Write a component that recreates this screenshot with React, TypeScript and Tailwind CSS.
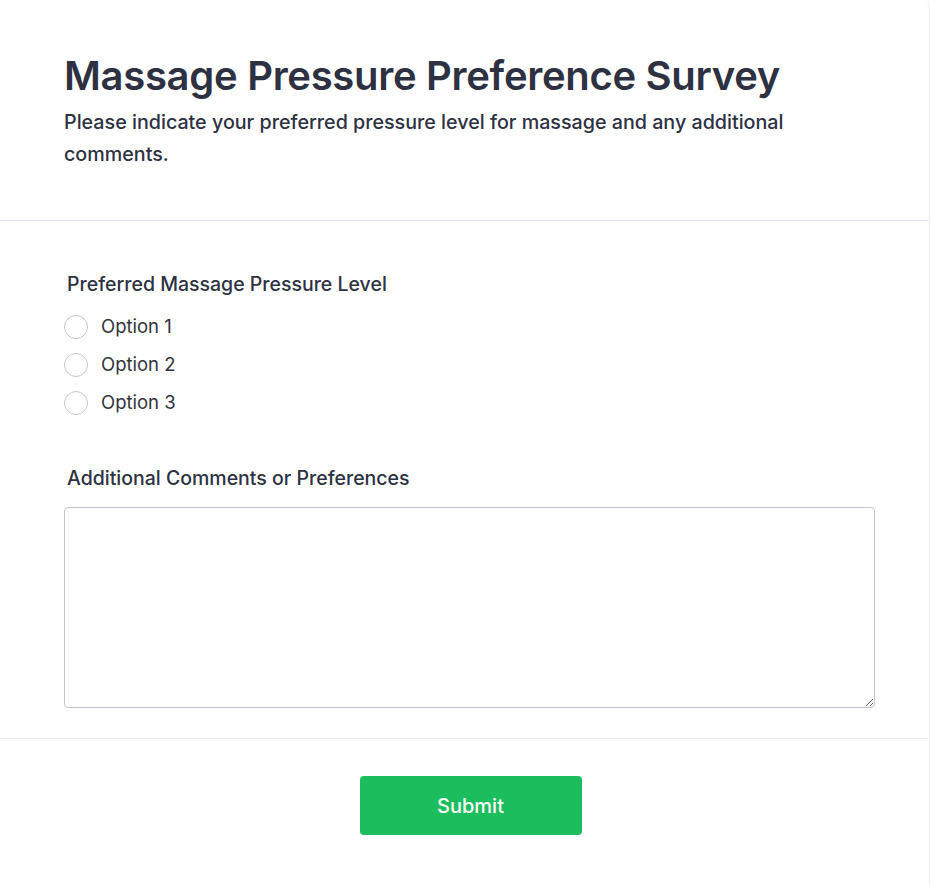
export default function App() {
  const options = ["Option 1", "Option 2", "Option 3"];
  return (
    <div className="min-h-screen bg-white font-['Inter',sans-serif] text-[#2d3142]">
      <div className="w-[930px] min-h-[885px] bg-white border-r border-[#ececf2] rounded-tr-md">
        {/* Header */}
        <div className="px-16 pt-[50px] pb-[50px] border-b border-[#dcdce6]">
          <h1 className="text-[40px] leading-[52px] font-semibold tracking-[-0.3px] text-[#2d3142]">
            Massage Pressure Preference Survey
          </h1>
          <p className="mt-[4px] text-[19.7px] leading-[32px] font-medium text-[#2d3142] max-w-[760px]">
            Please indicate your preferred pressure level for massage and any additional comments.
          </p>
        </div>

        {/* Body */}
        <div className="px-16 pt-[49px] pb-[30px] border-b border-[#ececf2]">
          <label className="block pl-[3px] text-[19.5px] leading-[28px] font-medium text-[#2d3142]">
            Preferred Massage Pressure Level
          </label>
          <div className="mt-[10px] flex flex-col">
            {options.map((o) => (
              <label key={o} className="flex items-center h-[38px] gap-[13px]">
                <span className="w-6 h-6 rounded-full border border-[#c4c4d0] bg-white" />
                <span className="text-[18.5px] text-[#33333d]">{o}</span>
              </label>
            ))}
          </div>
          <label className="block mt-[42px] pl-[3px] text-[19.5px] leading-[28px] font-medium text-[#2d3142]">
            Additional Comments or Preferences
          </label>
          <textarea className="mt-[15px] block w-[811px] h-[201px] rounded border border-[#c4c4d0] bg-white" />
        </div>

        {/* Footer */}
        <div className="flex justify-center pl-3 pt-[37px] pb-[50px]">
          <button className="w-[222px] h-[59px] rounded bg-[#1bbd5c] text-white text-[20px] font-medium">
            Submit
          </button>
        </div>
      </div>
    </div>
  );
}
